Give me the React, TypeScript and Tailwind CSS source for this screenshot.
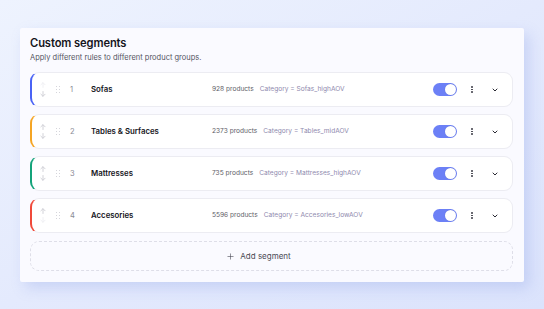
import { Plus } from 'lucide-react';

interface Segment {
  id: number;
  name: string;
  products: number;
  rule: string;
  color: string;
}

const segments: Segment[] = [
  { id: 1, name: 'Sofas', products: 928, rule: 'Category = Sofas_highAOV', color: 'border-l-[#4a63f5]' },
  { id: 2, name: 'Tables & Surfaces', products: 2373, rule: 'Category = Tables_midAOV', color: 'border-l-[#f5a524]' },
  { id: 3, name: 'Mattresses', products: 735, rule: 'Category = Mattresses_highAOV', color: 'border-l-[#14a37a]' },
  { id: 4, name: 'Accesories', products: 5596, rule: 'Category = Accesories_lowAOV', color: 'border-l-[#f04a3a]' },
];

function Arrow({ down, faint }: { down?: boolean; faint?: boolean }) {
  return (
    <svg
      width="6"
      height="6"
      viewBox="0 0 6 6"
      fill="none"
      stroke={faint ? '#eeeef3' : '#cdcdd4'}
      strokeWidth="0.9"
      strokeLinecap="round"
      strokeLinejoin="round"
      className={down ? 'rotate-180' : ''}
    >
      <path d="M3 5.5V0.8M0.9 2.8L3 0.7L5.1 2.8" />
    </svg>
  );
}

function Grip() {
  return (
    <div className="grid grid-cols-2 gap-x-[1.5px] gap-y-[1.5px] w-[4px]">
      {Array.from({ length: 6 }).map((_, i) => (
        <span key={i} className="w-[1.2px] h-[1.2px] rounded-full bg-[#c8c8d0]" />
      ))}
    </div>
  );
}

function Kebab() {
  return (
    <div className="flex flex-col items-center gap-[1px] w-[12px]">
      <span className="w-[1.5px] h-[1.5px] rounded-full bg-[#3a3a44]" />
      <span className="w-[1.5px] h-[1.5px] rounded-full bg-[#3a3a44]" />
      <span className="w-[1.5px] h-[1.5px] rounded-full bg-[#3a3a44]" />
    </div>
  );
}

function Chevron() {
  return (
    <div className="w-[12px] flex justify-center">
      <svg width="6" height="4" viewBox="0 0 6 4" fill="none" stroke="#2a2a33" strokeWidth="1" strokeLinecap="round" strokeLinejoin="round">
        <path d="M1 1L3 3L5 1" />
      </svg>
    </div>
  );
}

function Toggle() {
  return (
    <div className="w-[24px] h-[13px] rounded-full bg-[#6c80f6] flex items-center justify-end pr-[1px]">
      <span className="w-[11px] h-[11px] rounded-full bg-white shadow-[0_0_1px_rgba(0,0,0,0.2)]" />
    </div>
  );
}

function SegmentRow({ seg, first, last }: { seg: Segment; first: boolean; last: boolean }) {
  return (
    <div
      className={`h-[35px] flex items-center bg-white rounded-[9px] border border-[#ececf2] border-l-2 ${seg.color} pl-[8px] pr-[11px]`}
    >
      <div className="w-[6px] flex flex-col items-center gap-[3px]">
        <Arrow faint={first} />
        <Arrow down faint={last} />
      </div>
      <div className="ml-[10px] w-[5px]">
        <Grip />
      </div>
      <span className="ml-[9px] w-[21px] text-[7.5px] text-[#8a8a94]">{seg.id}</span>
      <span className="w-[121px] text-[7.8px] font-semibold text-[#15151c] truncate">{seg.name}</span>
      <span className="text-[6.6px] text-[#5c5c66]">{seg.products} products</span>
      <span className="ml-[6px] text-[6.6px] text-[#8f8aae]">{seg.rule}</span>
      <div className="flex-1" />
      <Toggle />
      <div className="ml-[9px]">
        <Kebab />
      </div>
      <div className="ml-[11px]">
        <Chevron />
      </div>
    </div>
  );
}

export default function App() {
  return (
    <div
      className="w-[544px] h-[309px] overflow-hidden bg-gradient-to-br from-[#eef3fe] via-[#e4eafd] to-[#dbe3fc] pt-[28px] pl-[20px]"
      style={{ fontFamily: 'Inter, "Noto Sans", sans-serif' }}
    >
      <div className="w-[504px] h-[254px] bg-[#fafaff] rounded-[2px] shadow-[5px_6px_14px_rgba(130,150,225,0.28)] pl-[10px] pr-[11px] pt-[7px]">
        <h1 className="text-[11.2px] leading-[16px] font-semibold tracking-[-0.01em] text-[#15151c]">Custom segments</h1>
        <p className="mt-[2px] text-[7.5px] leading-[10px] text-[#55555f]">
          Apply different rules to different product groups.
        </p>
        <div className="mt-[9px] flex flex-col gap-[7px]">
          {segments.map((s, i) => (
            <SegmentRow key={s.id} seg={s} first={i === 0} last={i === segments.length - 1} />
          ))}
          <div className="mt-[1px] h-[30px] rounded-[9px] border border-dashed border-[#dedee8] flex items-center justify-center pr-[26px] gap-[5px] text-[8px] text-[#4a4a55]">
            <Plus size={9} strokeWidth={1.6} className="text-[#4a4a55]" />
            <span>Add segment</span>
          </div>
        </div>
      </div>
    </div>
  );
}
